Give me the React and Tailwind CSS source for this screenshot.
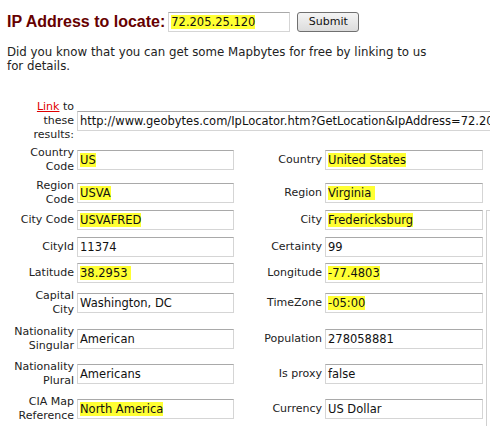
import React from 'react';

const rows = [
    { mt: 'mt-[4px]', h: 'h-[28px]', l1: ['Country', 'Code'], v1: 'US', hl1: true, l2: 'Country', v2: 'United States', hl2: true },
    { mt: 'mt-[5px]', h: 'h-[28px]', l1: ['Region', 'Code'], v1: 'USVA', hl1: true, l2: 'Region', v2: 'Virginia ', hl2: true },
    { mt: 'mt-[3px]', h: 'h-[20px]', l1: ['City Code'], v1: 'USVAFRED', hl1: true, l2: 'City', v2: 'Fredericksburg', hl2: true },
    { mt: 'mt-[7px]', h: 'h-[20px]', l1: ['CityId'], v1: '11374', l2: 'Certainty', v2: '99' },
    { mt: 'mt-[6px]', h: 'h-[20px]', l1: ['Latitude'], v1: '38.2953 ', hl1: true, l2: 'Longitude', v2: '-77.4803', hl2: true },
    { mt: 'mt-[6px]', h: 'h-[28px]', l1: ['Capital', 'City'], v1: 'Washington, DC', l2: 'TimeZone', v2: '-05:00', hl2: true },
    { mt: 'mt-[8px]', h: 'h-[28px]', l1: ['Nationality', 'Singular'], v1: 'American', l2: 'Population', v2: '278058881' },
    { mt: 'mt-[7px]', h: 'h-[28px]', l1: ['Nationality', 'Plural'], v1: 'Americans', l2: 'Is proxy', v2: 'false' },
    { mt: 'mt-[7px]', h: 'h-[28px]', l1: ['CIA Map', 'Reference'], v1: 'North America', hl1: true, l2: 'Currency', v2: 'US Dollar' },
];

function Field({ value, hl, className = '' }) {
    return (
        <div className={`h-[20px] bg-white border border-[#d5d5d5] border-t-[#a9a9a9] flex items-center pl-[2px] overflow-hidden whitespace-pre text-[11.5px] text-[#111] ${className}`}>
            <span className={hl ? 'bg-[#ffff33]' : ''}>{value}</span>
        </div>
    );
}

export default function App() {
    return (
        <div className="w-[490px] h-[426px] overflow-hidden bg-white text-[11px] leading-[14px] text-[#222]" style={{ fontFamily: '"DejaVu Sans", Verdana, sans-serif' }}>
            <div className="flex items-center pl-[7px] pt-[8px] h-[27px] box-content">
                <h1 className="text-[16px] font-bold text-[#660000] leading-[19px]" style={{ fontFamily: '"Liberation Sans", Arial, sans-serif' }}>
                    IP Address to locate:
                </h1>
                <Field value="72.205.25.120" hl className="ml-[3px] w-[122px] h-[20px]" />
                <button className="ml-[7px] w-[62px] h-[20px] rounded-[3px] border border-[#707070] bg-gradient-to-b from-[#f4f4f4] to-[#dcdcdc] text-[#111] text-[11px]">
                    Submit
                </button>
            </div>

            <p className="pl-[7px] mt-[10px] text-[11.8px] whitespace-nowrap">
                Did you know that you can get some Mapbytes for free by linking to us
                <br />
                for details.
            </p>

            <div className="flex mt-[27px]">
                <div className="w-[486px] shrink-0">
                    <div className="flex items-center h-[42px]">
                        <div className="w-[74px] shrink-0 text-right pl-[20px]">
                            <a className="text-[#e00000] underline">Link</a> to these results:
                        </div>
                        <Field value="http://www.geobytes.com/IpLocator.htm?GetLocation&IpAddress=72.205.25.120" className="ml-[3px] w-[440px] shrink-0" />
                    </div>

                    {rows.map((r, i) => (
                        <div key={i} className={`flex items-center ${r.mt} ${r.h}`}>
                            <div className="w-[74px] shrink-0 text-right">
                                {r.l1.map((t) => (
                                    <div key={t}>{t}</div>
                                ))}
                            </div>
                            <Field value={r.v1} hl={r.hl1} className="ml-[3px] w-[157px] shrink-0" />
                            <div className="w-[85px] shrink-0 ml-[3px] text-right">{r.l2}</div>
                            <Field value={r.v2} hl={r.hl2} className="ml-[3px] w-[158px] shrink-0" />
                        </div>
                    ))}
                </div>
                <div className="mt-[110px] w-[10px] h-[300px] border-l border-t border-[#d0d0d0] shrink-0" />
            </div>
        </div>
    );
}
